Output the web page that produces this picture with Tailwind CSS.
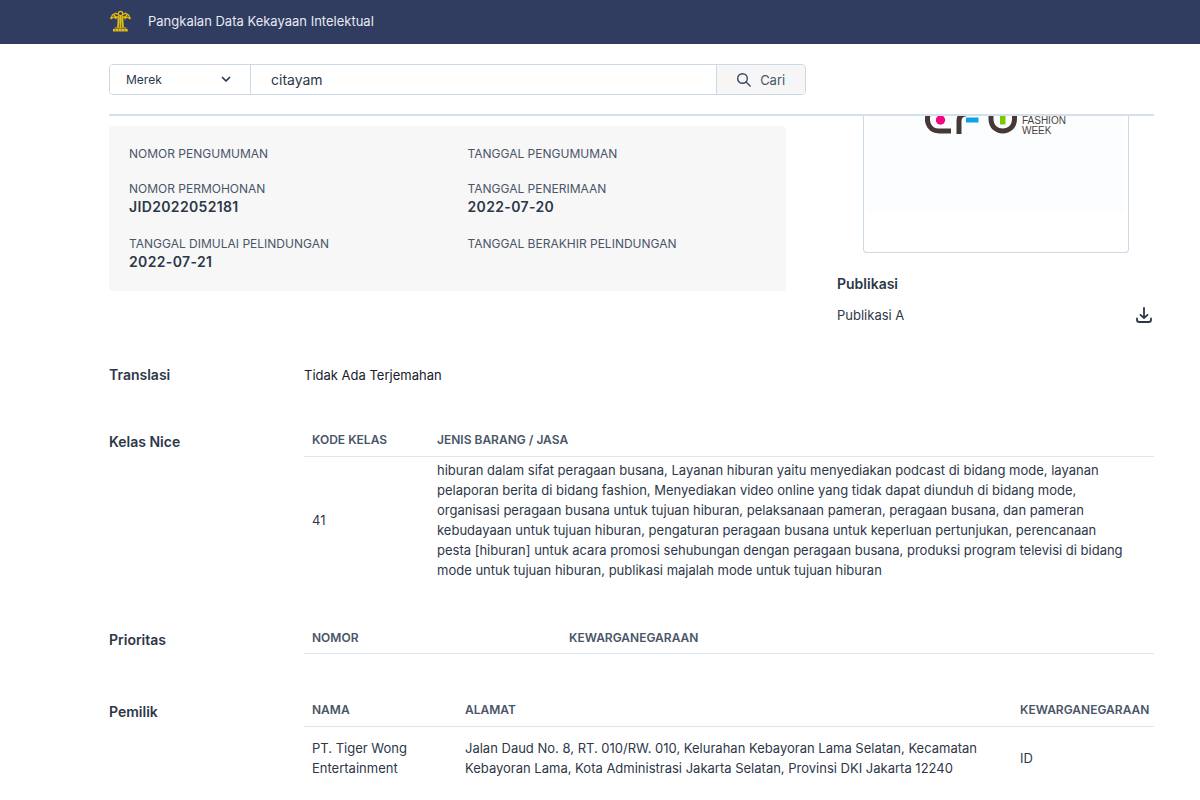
<!DOCTYPE html>
<html lang="id">
<head>
<meta charset="utf-8">
<meta name="viewport" content="width=device-width, initial-scale=1">
<title>Pangkalan Data Kekayaan Intelektual</title>
<script src="https://cdn.jsdelivr.net/npm/@tailwindcss/browser@4"></script>
</head>
<body class="flex h-screen flex-col overflow-hidden bg-white font-['Inter',sans-serif] text-[13px] leading-5 text-[#2d3748]">
<header class="flex h-11 shrink-0 items-center gap-4 bg-[#303c60] pr-12 pb-0.5 pl-[109px] text-[#e6eaf2]">
  <svg class="size-[23px]" viewBox="0 0 23 23" fill="none" stroke="#e0bb10" aria-hidden="true">
    <circle cx="11.500" cy="3.500" r="2.200" stroke-width="1.300"/>
    <path d="M9.500 4.500 6.500 3.300 3.500 5 1.500 9M13.500 4.500l3-1.200 3 1.700 2 4M2 8.800 5 7l2.500 2M21 8.800 18 7l-2.500 2M4.500 4.500l3 3 2-1.500M18.500 4.500l-3 3-2-1.500" stroke-width="1.300"/>
    <path d="M9.500 6.500c0 4 0 8-.7 11M13.500 6.500c0 4 0 8 .7 11M11.500 6v12" stroke-width="1.800"/>
    <path d="M5.500 18h12" stroke-width="1"/>
    <path d="M4 20.300h15" stroke-width="2.600" stroke-dasharray="2.700 .3"/>
  </svg>
  <span>Pangkalan Data Kekayaan Intelektual</span>
</header>
<div class="mr-[46px] ml-[109px] shrink-0 border-b-2 border-[#d5e0ea] pt-5 pb-[19px]">
  <form class="flex h-[31px] w-2/3 overflow-hidden rounded border border-[#cbd9e6]" onsubmit="return false">
    <div class="relative flex w-[141px] shrink-0 border-r border-[#cbd9e6]">
      <select aria-label="Jenis" class="w-full appearance-none bg-white pl-4 text-xs text-[#2d3748]"><option>Merek</option></select>
      <svg class="pointer-events-none absolute top-[7px] right-4 size-4" viewBox="0 0 16 16" fill="none" stroke="#2d3748" stroke-width="1.700" stroke-linecap="round" stroke-linejoin="round" aria-hidden="true"><path d="M4.500 5.500 8 9l3.500-3.500"/></svg>
    </div>
    <input aria-label="Kata kunci" type="text" value="citayam" class="min-w-0 flex-1 bg-white px-5 pt-px text-sm">
    <button type="submit" class="flex w-[89px] shrink-0 items-center justify-center gap-2 border-l border-[#cbd9e6] bg-[#f6f6f6] text-[#4a5568]">
      <svg class="size-4" viewBox="0 0 16 16" fill="none" stroke="#3b4660" stroke-width="1.400" stroke-linecap="round" aria-hidden="true"><circle cx="6.500" cy="6.500" r="4.800"/><path d="m10 10 4.200 4"/></svg>
      Cari
    </button>
  </form>
</div>
<main class="mr-[46px] ml-[109px] min-h-0 flex-1 overflow-hidden">
  <div class="flex items-start justify-between gap-[51px]">
    <dl class="mt-[10px] grid flex-1 grid-cols-2 rounded bg-[#f7f7f7] pt-[19px] pb-5 text-xs text-[#4a5568]">
      <div class="h-[35px] px-5"><dt class="leading-[18px]">NOMOR PENGUMUMAN</dt></div>
      <div class="px-5"><dt class="leading-[18px]">TANGGAL PENGUMUMAN</dt></div>
      <div class="h-[55px] px-5"><dt class="leading-[18px]">NOMOR PERMOHONAN</dt><dd class="text-sm leading-[18px] font-semibold tracking-wide text-[#2d3748]">JID2022052181</dd></div>
      <div class="px-5"><dt class="leading-[18px]">TANGGAL PENERIMAAN</dt><dd class="text-sm leading-[18px] font-semibold tracking-wide text-[#2d3748]">2022-07-20</dd></div>
      <div class="px-5"><dt class="leading-[18px]">TANGGAL DIMULAI PELINDUNGAN</dt><dd class="text-sm leading-[18px] font-semibold tracking-wide text-[#2d3748]">2022-07-21</dd></div>
      <div class="px-5"><dt class="leading-[18px]">TANGGAL BERAKHIR PELINDUNGAN</dt></div>
    </dl>
    <aside class="w-[317px] shrink-0">
      <div class="mr-[25px] ml-[26px] h-[137px] rounded-b border border-t-0 border-[#cbd9e6]">
        <div class="mx-1 h-24 bg-[#fcfdfe]">
          <svg class="mx-auto h-5 w-[142px]" viewBox="0 0 142 20" fill="none" role="img" aria-label="Citayam Fashion Week">
            <g stroke="#453937" stroke-width="5">
              <path d="M6 -7C-1 3 3 15 14 15h12M34 18V5q0-7 7-7M66 -5v8c0 16 23.500 16 23.500 0V-5"/>
            </g>
            <circle cx="15.500" cy="4" r="4.700" fill="#f5057f"/>
            <path d="M41 1.500h12.500v5H41z" fill="#0ba5e6"/>
            <path d="M75 -5h5.500V8.500H75z" fill="#7bc905"/>
            <g fill="#4d4341" font-family="Liberation Sans" font-size="10"><text x="97" y="8">FASHION</text><text x="97" y="18">WEEK</text></g>
          </svg>
        </div>
      </div>
      <h2 class="mt-[21px] text-sm font-semibold">Publikasi</h2>
      <div class="mt-[11px] flex items-center justify-between">
        <span>Publikasi A</span>
        <a href="#" aria-label="Unduh Publikasi A"><svg class="size-5" viewBox="0 0 20 20" fill="none" stroke="#2d3748" stroke-width="1.800" stroke-linecap="round" stroke-linejoin="round" aria-hidden="true"><path d="M10 3v10M6.500 9.800 10 13.200l3.500-3.400M3 13.500v1.200Q3 17 5.300 17h9.400q2.300 0 2.300-2.300v-1.200"/></svg></a>
      </div>
    </aside>
  </div>
  <section class="mt-10 flex">
    <h2 class="w-[195px] shrink-0 text-sm font-semibold">Translasi</h2>
    <p class="text-[#1a202c]">Tidak Ada Terjemahan</p>
  </section>
  <section class="mt-[38px] flex">
    <h2 class="mt-[9px] w-[195px] shrink-0 text-sm font-semibold">Kelas Nice</h2>
    <table class="flex-1 table-fixed text-left">
      <thead class="border-b border-[#dde5f2] text-xs text-[#4a5568]"><tr><th class="h-[33px] w-[125px] px-2 pt-0.5 font-semibold">KODE KELAS</th><th class="px-2 pt-0.5 font-semibold">JENIS BARANG / JASA</th></tr></thead>
      <tbody><tr><td class="px-2">41</td><td class="py-[3px] pr-6 pl-2">hiburan dalam sifat peragaan busana, Layanan hiburan yaitu menyediakan podcast di bidang mode, layanan pelaporan berita di bidang fashion, Menyediakan video online yang tidak dapat diunduh di bidang mode, organisasi peragaan busana untuk tujuan hiburan, pelaksanaan pameran, peragaan busana, dan pameran kebudayaan untuk tujuan hiburan, pengaturan peragaan busana untuk keperluan pertunjukan, perencanaan pesta [hiburan] untuk acara promosi sehubungan dengan peragaan busana, produksi program televisi di bidang mode untuk tujuan hiburan, publikasi majalah mode untuk tujuan hiburan</td></tr></tbody>
    </table>
  </section>
  <section class="mt-[38px] flex">
    <h2 class="mt-[9px] w-[195px] shrink-0 text-sm font-semibold">Prioritas</h2>
    <table class="flex-1 table-fixed text-left">
      <thead class="border-b border-[#dde5f2] text-xs text-[#4a5568]"><tr><th class="h-[33px] w-[257px] px-2 pt-0.5 font-semibold">NOMOR</th><th class="px-2 pt-0.5 font-semibold">KEWARGANEGARAAN</th></tr></thead>
    </table>
  </section>
  <section class="mt-[39px] flex">
    <h2 class="mt-[9px] w-[195px] shrink-0 text-sm font-semibold">Pemilik</h2>
    <table class="flex-1 table-fixed text-left">
      <thead class="border-b border-[#dde5f2] text-xs text-[#4a5568]"><tr><th class="h-[33px] w-[153px] px-2 pt-0.5 font-semibold">NAMA</th><th class="px-2 pt-0.5 font-semibold">ALAMAT</th><th class="w-[142px] pt-0.5 pl-2 font-semibold">KEWARGANEGARAAN</th></tr></thead>
      <tbody><tr><td class="px-2 py-[11px]">PT. Tiger Wong Entertainment</td><td class="px-2">Jalan Daud No. 8, RT. 010/RW. 010, Kelurahan Kebayoran Lama Selatan, Kecamatan Kebayoran Lama, Kota Administrasi Jakarta Selatan, Provinsi DKI Jakarta 12240</td><td class="px-2">ID</td></tr></tbody>
    </table>
  </section>
</main>
</body>
</html>
